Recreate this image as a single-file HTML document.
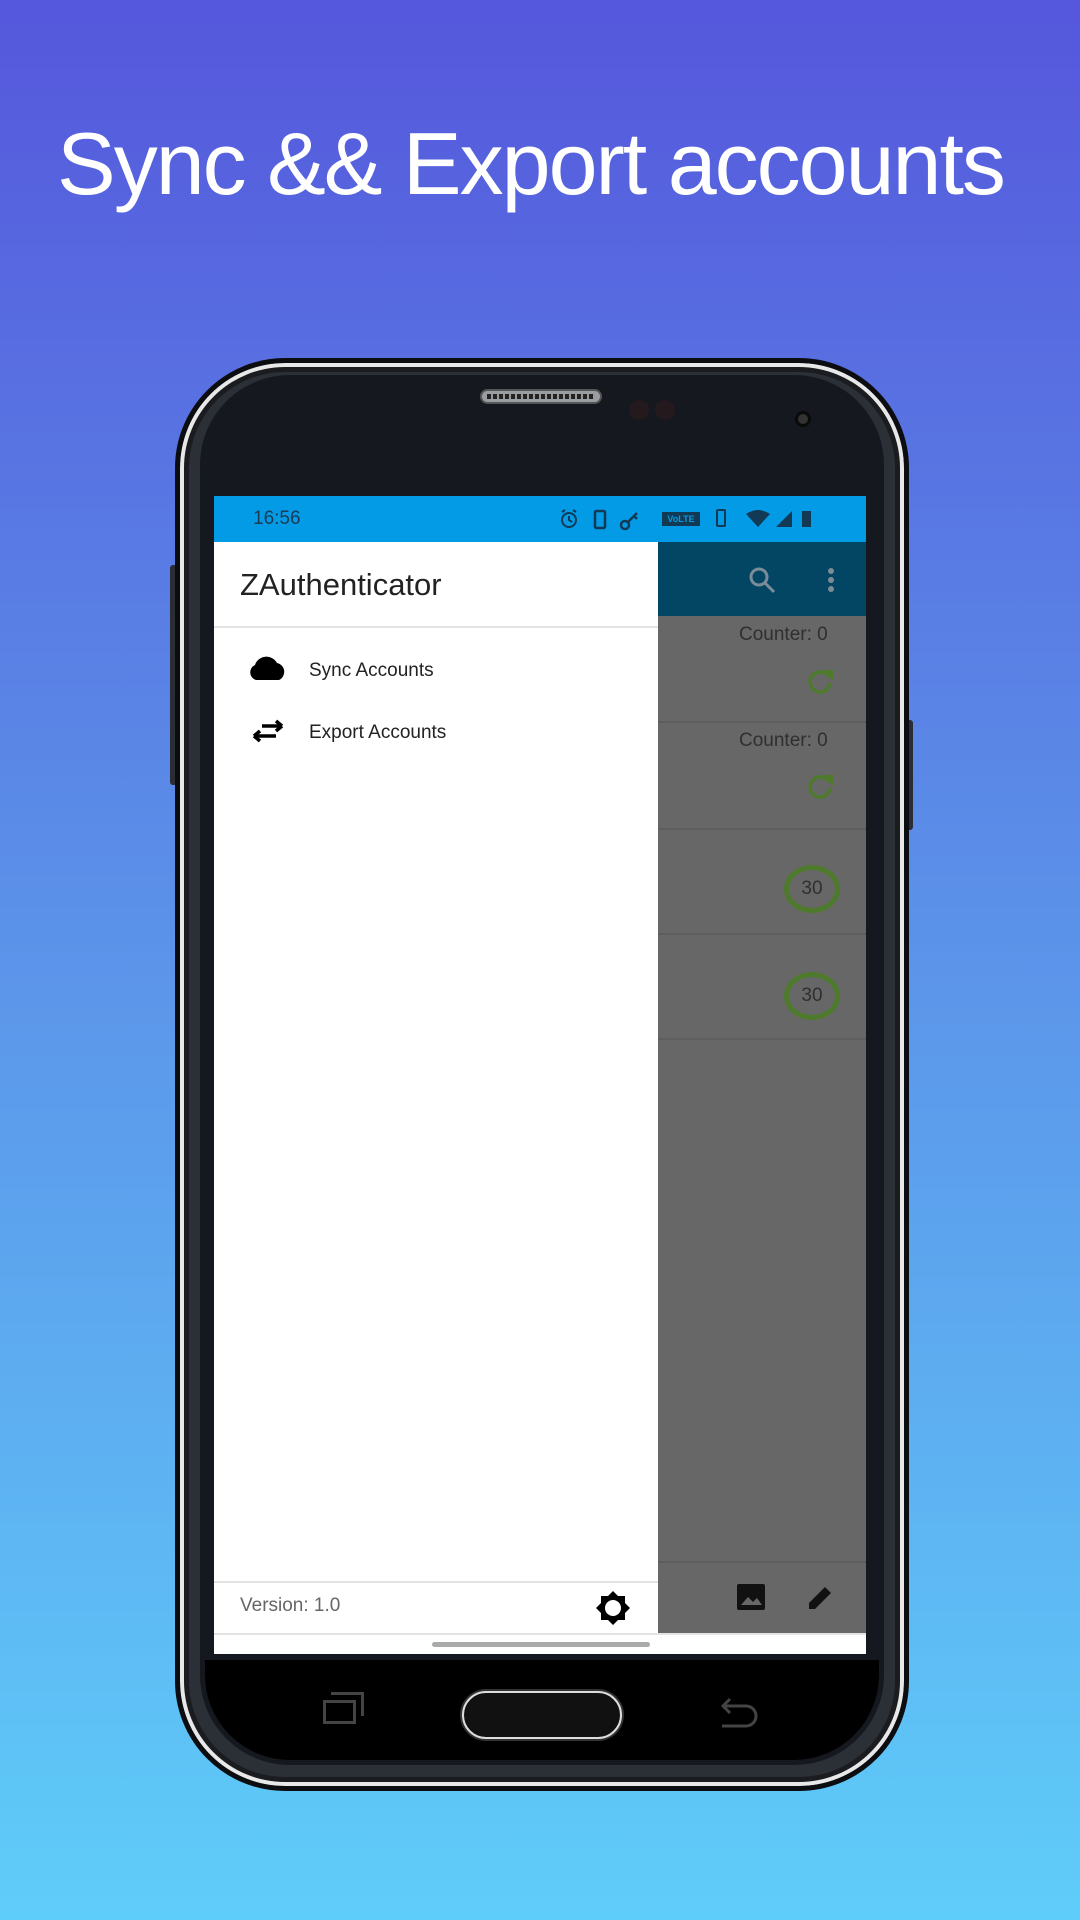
<!DOCTYPE html>
<html><head><meta charset="utf-8"><style>
*{margin:0;padding:0;box-sizing:border-box}
body{width:1080px;height:1920px;overflow:hidden;background:linear-gradient(180deg,#5557dc 0%,#5b8ee8 45%,#5fcdf9 100%);font-family:"Liberation Sans",sans-serif;position:relative}
.title{position:absolute;left:57px;top:113px;font-size:88px;color:#fff;letter-spacing:-2px;white-space:nowrap}
.abs{position:absolute}
.phone{left:175px;top:358px;width:734px;height:1433px;border-radius:110px;background:#2b2f36;border:5px solid #0c0d10;box-shadow:inset 0 0 0 4px #e8e8e8,inset 0 0 0 9px #1a1c20}
.inner{left:200px;top:375px;width:684px;height:1390px;border-radius:90px;background:#15181e}
.screen{left:214px;top:496px;width:652px;height:1158px;background:#fff;overflow:hidden}
.t{position:absolute;white-space:nowrap}
</style></head><body>
<div class="title">Sync &amp;&amp; Export accounts</div>
<div class="abs" style="left:170px;top:565px;width:8px;height:220px;background:#2a2d33;border-radius:3px"></div>
<div class="abs" style="left:906px;top:720px;width:7px;height:110px;background:#2a2d33;border-radius:3px"></div>
<div class="abs phone"></div>
<div class="abs inner"></div>
<div class="abs" style="left:205px;top:1660px;width:674px;height:100px;background:#000;border-radius:0 0 85px 85px"></div>
<div class="abs" style="left:480px;top:389px;width:122px;height:15px;border-radius:8px;background:#9a9da2;border:2px solid #555"></div>
<div class="abs" style="left:487px;top:394px;width:108px;height:5px;background:repeating-linear-gradient(90deg,#222 0 4px,#999 4px 6px)"></div>
<div class="abs" style="left:629px;top:400px;width:20px;height:20px;border-radius:50%;background:#24191d"></div>
<div class="abs" style="left:655px;top:400px;width:20px;height:20px;border-radius:50%;background:#24191d"></div>
<div class="abs" style="left:795px;top:411px;width:16px;height:16px;border-radius:50%;background:#333;border:3px solid #0a0a0a"></div>
<div class="abs screen">
  <div class="abs" style="left:0;top:0;width:652px;height:46px;background:#039be5"></div>
  <div class="t" style="left:39px;top:12px;font-size:19px;color:#1b3b55">16:56</div>
  <svg class="abs" style="left:344px;top:12px" width="100" height="24"><circle cx="11" cy="12" r="7" fill="none" stroke="#123a55" stroke-width="2"/><path d="M11 8 V12 L14 14 M4 4 L7 2 M18 4 L15 2" stroke="#123a55" stroke-width="2" fill="none"/><rect x="37" y="3" width="10" height="17" rx="1.5" fill="none" stroke="#123a55" stroke-width="2.5"/><circle cx="67" cy="17" r="4" fill="none" stroke="#123a55" stroke-width="2.5"/><path d="M70 14 L79 5 M76 8 L79 11" stroke="#123a55" stroke-width="2.5"/></svg>
  <div class="abs" style="left:448px;top:16px;width:38px;height:14px;background:#123a55;color:#039be5;font-size:9px;font-weight:bold;text-align:center;line-height:14px">VoLTE</div>
  <div class="abs" style="left:502px;top:13px;width:10px;height:18px;border:2px solid #123a55;border-radius:2px"></div>
  <svg class="abs" style="left:530px;top:12px" width="70" height="22"><path d="M2 6 Q14 -2 26 6 L14 19Z" fill="#123a55"/><path d="M48 3 L48 19 L32 19Z" fill="#123a55"/><rect x="58" y="3" width="9" height="16" fill="#123a55"/></svg>
  <div class="abs" style="left:444px;top:46px;width:208px;height:74px;background:#024664"></div>
  <svg class="abs" style="left:534px;top:70px" width="30" height="30"><circle cx="11" cy="11" r="8" fill="none" stroke="#7b8c98" stroke-width="3"/><path d="M17 17 L26 26" stroke="#7b8c98" stroke-width="3"/></svg>
  <div class="abs" style="left:614px;top:72px;width:6px;height:6px;border-radius:3px;background:#7b8c98;box-shadow:0 9px #7b8c98,0 18px #7b8c98"></div>
  <div class="abs" style="left:444px;top:120px;width:208px;height:1018px;background:#676767"></div>
  <div class="abs" style="left:444px;top:225px;width:208px;height:2px;background:#5e5e5e"></div>
  <div class="abs" style="left:444px;top:332px;width:208px;height:2px;background:#5e5e5e"></div>
  <div class="abs" style="left:444px;top:437px;width:208px;height:2px;background:#5e5e5e"></div>
  <div class="abs" style="left:444px;top:542px;width:208px;height:2px;background:#5e5e5e"></div>
  <div class="abs" style="left:444px;top:1065px;width:208px;height:2px;background:#5e5e5e"></div>
  <div class="t" style="left:525px;top:128px;font-size:19px;color:#2f2f2f">Counter: 0</div>
  <div class="t" style="left:525px;top:234px;font-size:19px;color:#2f2f2f">Counter: 0</div>
  <svg class="abs" style="left:592px;top:170px" width="30" height="30"><path d="M22 10 A10 10 0 1 0 24 17" fill="none" stroke="#4e7a2c" stroke-width="3.5"/><path d="M16 4 L27 4 L27 15Z" fill="#4e7a2c"/></svg>
  <svg class="abs" style="left:592px;top:275px" width="30" height="30"><path d="M22 10 A10 10 0 1 0 24 17" fill="none" stroke="#4e7a2c" stroke-width="3.5"/><path d="M16 4 L27 4 L27 15Z" fill="#4e7a2c"/></svg>
  <div class="abs" style="left:570px;top:369px;width:56px;height:48px;border-radius:50%;border:5px solid #4e7a2c;text-align:center;line-height:38px;font-size:19px;color:#2f2f2f">30</div>
  <div class="abs" style="left:570px;top:476px;width:56px;height:48px;border-radius:50%;border:5px solid #4e7a2c;text-align:center;line-height:38px;font-size:19px;color:#2f2f2f">30</div>
  <svg class="abs" style="left:523px;top:1088px" width="100" height="30"><rect x="0" y="0" width="28" height="26" rx="2" fill="#111"/><path d="M4 21 L11 13 L16 18 L20 14 L25 21Z" fill="#676767"/><path d="M72 25 L72 19 L88 3 L94 9 L78 25Z" fill="#111"/></svg>
  <div class="abs" style="left:0;top:46px;width:444px;height:1092px;background:#fff"></div>
  <div class="t" style="left:26px;top:71px;font-size:31px;color:#222">ZAuthenticator</div>
  <div class="abs" style="left:0;top:130px;width:444px;height:2px;background:#e3e3e3"></div>
  <svg class="abs" style="left:34px;top:158px" width="40" height="28"><path d="M8 26 A8 8 0 0 1 7 11 A12 12 0 0 1 29 9 A9 9 0 0 1 31 26Z" fill="#000"/></svg>
  <div class="t" style="left:95px;top:164px;font-size:19px;color:#222">Sync Accounts</div>
  <svg class="abs" style="left:38px;top:222px" width="34" height="26"><path d="M2 18 H24 M2 18 L8 13 M2 18 L8 23 M30 8 H10 M30 8 L24 3 M30 8 L24 13" stroke="#000" stroke-width="3.5" fill="none"/></svg>
  <div class="t" style="left:95px;top:226px;font-size:19px;color:#222">Export Accounts</div>
  <div class="abs" style="left:0;top:1085px;width:444px;height:2px;background:#e3e3e3"></div>
  <div class="t" style="left:26px;top:1099px;font-size:19px;color:#666">Version: 1.0</div>
  <svg class="abs" style="left:381px;top:1094px" width="36" height="36"><path d="M18 1 L23 6 L30 6 L30 13 L35 18 L30 23 L30 30 L23 30 L18 35 L13 30 L6 30 L6 23 L1 18 L6 13 L6 6 L13 6Z" fill="#000"/><circle cx="18" cy="18" r="8" fill="#fff"/></svg>
  <div class="abs" style="left:0;top:1137px;width:652px;height:2px;background:#e3e3e3"></div>
  <div class="abs" style="left:218px;top:1146px;width:218px;height:5px;border-radius:3px;background:#aaa"></div>
</div>
<div class="abs" style="left:323px;top:1700px;width:33px;height:24px;border:3px solid #444"></div>
<div class="abs" style="left:331px;top:1692px;width:33px;height:24px;border-top:3px solid #444;border-right:3px solid #444"></div>
<div class="abs" style="left:462px;top:1691px;width:160px;height:48px;border-radius:24px;background:#111;border:2px solid #ddd;box-shadow:0 0 0 2px #333"></div>
<svg class="abs" style="left:718px;top:1695px" width="44" height="36"><path d="M4 31 H28 A10 10 0 0 0 28 11 H6 M12 4 L5 11 L12 18" stroke="#444" stroke-width="3" fill="none"/></svg>
</body></html>
